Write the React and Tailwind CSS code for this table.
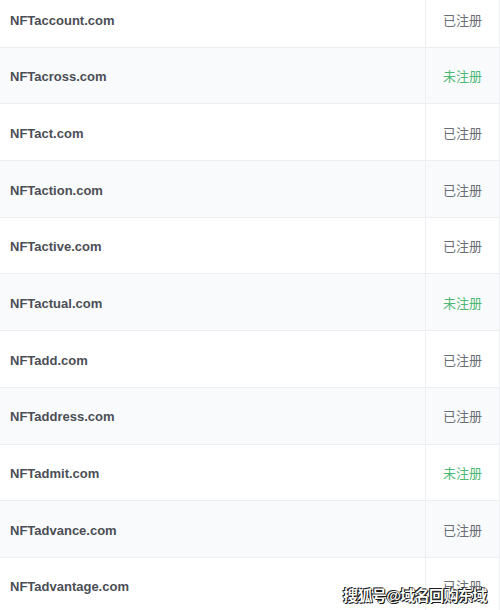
const rows = [
  ["NFTaccount.com", false],
  ["NFTacross.com", true],
  ["NFTact.com", false],
  ["NFTaction.com", false],
  ["NFTactive.com", false],
  ["NFTactual.com", true],
  ["NFTadd.com", false],
  ["NFTaddress.com", false],
  ["NFTadmit.com", true],
  ["NFTadvance.com", false],
  ["NFTadvantage.com", false],
];

export default function App() {
  return (
    <div className="relative h-[610px] w-[500px] overflow-hidden bg-white font-['Liberation_Sans','Noto_Sans_CJK_SC',sans-serif]">
      <div className="-mt-[9px] border-r border-[#eceef1]">
        {rows.map(([name, free], i) => (
          <div
            key={name}
            className={`grid h-[56.7px] grid-cols-[426px_1fr] border-b border-[#eceef1] ${i % 2 ? "bg-[#f9fafc]" : "bg-white"}`}
          >
            <div className="flex items-center border-r border-[#eceef1] pl-[10px] pt-[3px] text-[13px] font-bold text-[#4b4e55]">
              {name}
            </div>
            <div className={`flex items-center justify-center pt-[3px] text-[13px] ${free ? "text-[#4cb874]" : "text-[#6a6e74]"}`}>
              {free ? "未注册" : "已注册"}
            </div>
          </div>
        ))}
      </div>
      <div className="absolute left-[343px] top-[585px] text-[15px] font-bold tracking-[-0.6px] text-white [text-shadow:0_0_1px_#000,0_0_1px_#000,1px_1px_0_#222,-1px_-1px_0_#222]">
        搜狐号@域名回购东域
      </div>
    </div>
  );
}
